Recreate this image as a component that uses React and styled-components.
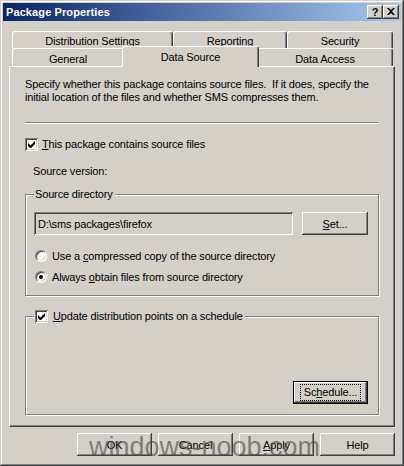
import React from 'react';
import styled, { createGlobalStyle } from 'styled-components';

const GlobalStyle = createGlobalStyle`
  html, body {
    margin: 0;
    padding: 0;
    background: #d4d0c8;
  }
  * { box-sizing: border-box; }
`;

const Window = styled.div`
  position: relative;
  width: 404px;
  height: 466px;
  padding: 3px;
  background: #d4d0c8;
  font-family: "Liberation Sans", Arial, sans-serif;
  font-size: 11px;
  letter-spacing: -0.15px;
  color: #000;
  box-shadow: inset -1px -1px #404040, inset 1px 1px #d4d0c8,
    inset -2px -2px #808080, inset 2px 2px #fff;
  overflow: hidden;
`;

const TitleBar = styled.div`
  height: 18px;
  display: flex;
  align-items: center;
  justify-content: space-between;
  padding: 0 2px 0 3px;
  background: linear-gradient(to right, #0a246a, #a6caf0);
`;

const TitleText = styled.span`
  color: #fff;
  font-weight: bold;
  letter-spacing: 0.1px;
`;

const CaptionButtons = styled.div`
  display: flex;
`;

const CaptionButton = styled.div`
  width: 16px;
  height: 14px;
  display: flex;
  align-items: center;
  justify-content: center;
  background: #d4d0c8;
  box-shadow: inset -1px -1px #404040, inset 1px 1px #fff,
    inset -2px -2px #808080, inset 2px 2px #d4d0c8;
  font-weight: bold;
  font-size: 11px;
  color: #000;
  padding-bottom: 1px;
`;

const Body = styled.div`
  padding: 10px 6px 0 6px;
`;

const TabRow = styled.div`
  display: flex;
  padding: 0 2px 0 3px;
  height: ${p => p.$h}px;
`;

const Tab = styled.div`
  width: ${p => p.$w}px;
  flex: none;
  display: flex;
  align-items: center;
  justify-content: center;
  padding-top: ${p => (p.$selected ? 0 : 2)}px;
  background: #d4d0c8;
  border-radius: 3px 3px 0 0;
  border-top: 1px solid #fff;
  border-left: 1px solid #fff;
  border-right: 1px solid #404040;
  box-shadow: inset -1px 0 #808080;
  ${p => p.$selected && `
    margin: -2px -2px -1px -2px;
    width: ${p.$w + 4}px;
    height: calc(100% + 3px);
    z-index: 1;
  `}
`;

const Panel = styled.div`
  height: 361px;
  display: flex;
  flex-direction: column;
  padding: 11px 15px 0 14px;
  border-top: 1px solid #fff;
  border-left: 1px solid #fff;
  border-right: 1px solid #404040;
  border-bottom: 1px solid #404040;
  box-shadow: inset -1px -1px #808080;
`;

const Description = styled.p`
  margin: 0 0 0 1px;
  line-height: 13px;
`;

const Separator = styled.div`
  margin: 18px 1px 0 1px;
  height: 2px;
  border-top: 1px solid #808080;
  border-bottom: 1px solid #fff;
`;

const OptionRow = styled.label`
  display: flex;
  align-items: center;
  gap: ${p => p.$gap || 5}px;
  height: 16px;
  margin-top: ${p => p.$mt || 0}px;
  margin-left: ${p => p.$ml || 0}px;
`;

const CheckBox = styled.span`
  width: 13px;
  height: 13px;
  flex: none;
  display: flex;
  align-items: center;
  justify-content: center;
  background: #fff;
  box-shadow: inset 1px 1px #808080, inset -1px -1px #fff,
    inset 2px 2px #404040, inset -2px -2px #d4d0c8;
`;

const Radio = styled.span`
  width: 12px;
  height: 12px;
  flex: none;
  border-radius: 50%;
  display: flex;
  align-items: center;
  justify-content: center;
  background: #fff;
  border: 1px solid;
  border-color: #808080 #fff #fff #808080;
  box-shadow: inset 1px 1px #404040, inset -1px -1px #d4d0c8;
`;

const RadioDot = styled.span`
  width: 4px;
  height: 4px;
  border-radius: 50%;
  background: #000;
`;

const Plain = styled.div`
  height: 13px;
  line-height: 13px;
  margin-top: ${p => p.$mt}px;
  margin-left: ${p => p.$ml}px;
`;

const Group = styled.fieldset`
  margin: ${p => p.$mt}px 0 0 1px;
  padding: ${p => p.$pt}px 10px ${p => p.$pb}px 8px;
  min-inline-size: 0;
  border: 1px solid #808080;
  box-shadow: inset 1px 1px #fff, 1px 1px #fff;
`;

const Legend = styled.legend`
  padding: 0 2px 0 1px;
  background: #d4d0c8;
  line-height: 13px;
  display: flex;
  align-items: center;
  gap: 5px;
`;

const EditRow = styled.div`
  display: flex;
  align-items: center;
  gap: 9px;
`;

const TextBox = styled.div`
  width: 263px;
  height: 23px;
  padding: 0 4px;
  display: flex;
  align-items: center;
  background: #d4d0c8;
  box-shadow: inset 1px 1px #808080, inset -1px -1px #fff,
    inset 2px 2px #404040, inset -2px -2px #d4d0c8;
`;

const Button = styled.div`
  width: ${p => p.$w || 75}px;
  height: 23px;
  flex: none;
  display: flex;
  align-items: center;
  justify-content: center;
  background: #d4d0c8;
  box-shadow: ${p =>
    p.$default
      ? 'inset 0 0 0 1px #000, inset -2px -2px #404040, inset 2px 2px #fff, inset -3px -3px #808080'
      : 'inset -1px -1px #404040, inset 1px 1px #fff, inset -2px -2px #808080, inset 2px 2px #d4d0c8'};
`;

const FocusRect = styled.span`
  padding: 1px 3px;
  border: 1px dotted #000;
  line-height: 13px;
`;

const ScheduleSlot = styled.div`
  height: 91px;
  display: flex;
  align-items: flex-end;
  justify-content: flex-end;
  padding-bottom: 10px;
`;

const Footer = styled.div`
  display: flex;
  justify-content: flex-end;
  gap: 6px;
  margin-top: 6px;
`;

const Watermark = styled.div`
  position: absolute;
  left: 89px;
  top: 432px;
  font-family: "Liberation Sans", Arial, sans-serif;
  font-size: 27px;
  letter-spacing: 0;
  color: rgba(70, 70, 70, 0.62);
  pointer-events: none;
  white-space: nowrap;
`;

const Check = () => (
  <svg width="7" height="7" viewBox="0 0 7 7">
    <path d="M0 2v3l2 2h1l4-4V0L2.5 4.5z" fill="#000" />
  </svg>
);

export default function App() {
  return (
    <>
      <GlobalStyle />
      <Window>
        <TitleBar>
          <TitleText>Package Properties</TitleText>
          <CaptionButtons>
            <CaptionButton>?</CaptionButton>
            <CaptionButton>
              <svg width="8" height="7" viewBox="0 0 8 7">
                <path d="M0 0h2l2 2 2-2h2L5 3.5 8 7H6L4 5 2 7H0l3-3.5z" fill="#000" />
              </svg>
            </CaptionButton>
          </CaptionButtons>
        </TitleBar>
        <Body>
          <TabRow $h={17}>
            <Tab $w={161}>Distribution Settings</Tab>
            <Tab $w={114}>Reporting</Tab>
            <Tab $w={106}>Security</Tab>
          </TabRow>
          <TabRow $h={18}>
            <Tab $w={112}>General</Tab>
            <Tab $w={133} $selected>Data Source</Tab>
            <Tab $w={136}>Data Access</Tab>
          </TabRow>
          <Panel>
            <Description>
              Specify whether this package contains source files.&nbsp; If it does, specify the
              <br />
              initial location of the files and whether SMS compresses them.
            </Description>
            <Separator />
            <OptionRow $mt={12} $ml={1} $gap={4}>
              <CheckBox><Check /></CheckBox>
              <span><u>T</u>his package contains source files</span>
            </OptionRow>
            <Plain $mt={13} $ml={9}>Source version:</Plain>
            <Group $mt={10} $pt={11} $pb={10}>
              <Legend>Source directory</Legend>
              <EditRow>
                <TextBox>D:\sms packages\firefox</TextBox>
                <Button $w={66}><span><u>S</u>et...</span></Button>
              </EditRow>
              <OptionRow $mt={13} $ml={1}>
                <Radio />
                <span>Use a <u>c</u>ompressed copy of the source directory</span>
              </OptionRow>
              <OptionRow $mt={5} $ml={1}>
                <Radio><RadioDot /></Radio>
                <span>Always <u>o</u>btain files from source directory</span>
              </OptionRow>
            </Group>
            <Group $mt={14} $pt={0} $pb={0}>
              <Legend>
                <CheckBox><Check /></CheckBox>
                <span><u>U</u>pdate distribution points on a schedule</span>
              </Legend>
              <ScheduleSlot>
                <Button $w={75} $default>
                  <FocusRect>Sc<u>h</u>edule...</FocusRect>
                </Button>
              </ScheduleSlot>
            </Group>
          </Panel>
          <Footer>
            <Button>OK</Button>
            <Button>Cancel</Button>
            <Button><span><u>A</u>pply</span></Button>
            <Button>Help</Button>
          </Footer>
        </Body>
        <Watermark>windows-noob.com</Watermark>
      </Window>
    </>
  );
}
